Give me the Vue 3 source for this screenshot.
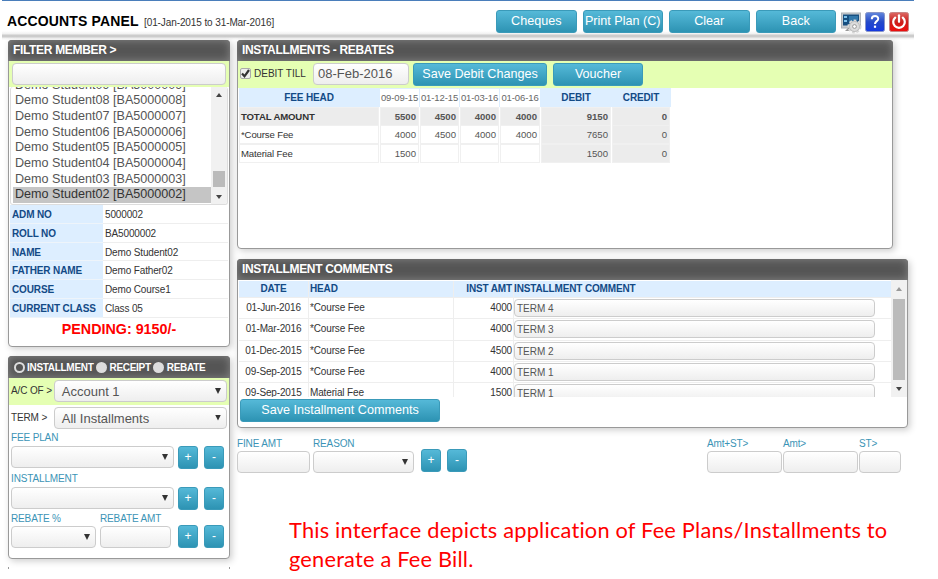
<template>
  <div class="page">
    <header class="topbar">
      <h1>ACCOUNTS PANEL</h1>
      <span class="period">[01-Jan-2015 to 31-Mar-2016]</span>
      <nav class="actions">
        <button v-for="a in actions" :key="a" class="btn btn-top">{{ a }}</button>
      </nav>
      <div class="icons">
        <svg width="21" height="22" viewBox="0 0 21 22">
          <rect x="0.5" y="1" width="19" height="15" fill="#c9ccd0" stroke="#aeb2b6" />
          <rect x="2" y="2.500" width="16" height="11" fill="#174f80" />
          <path d="M3 4h3v2h-3zM3 8h3v2h-3z" fill="#7fc3ec" />
          <path d="M8 4h9v4l-9 4z" fill="#3277aa" />
          <path d="M4 19l3-3h5v3z" fill="#999" />
          <circle cx="13.500" cy="14.500" r="5.800" fill="#dedede" stroke="#d8d8d8" stroke-width="2.500" stroke-dasharray="2.600 1.700" />
          <circle cx="13.500" cy="14.500" r="5" fill="#dcdcdc" stroke="#aaa" stroke-width=".6" />
          <circle cx="13.500" cy="14.500" r="1.900" fill="#fff" stroke="#888" stroke-width=".8" />
        </svg>
        <svg width="20" height="20" viewBox="0 0 20 20">
          <defs>
            <linearGradient id="blue" x1="0" y1="0" x2="0" y2="1">
              <stop offset="0" stop-color="#6387dc" />
              <stop offset=".5" stop-color="#2449c8" />
              <stop offset="1" stop-color="#1438e0" />
            </linearGradient>
          </defs>
          <rect x=".5" y=".5" width="19" height="19" rx="2" fill="url(#blue)" stroke="#8996c8" />
          <path d="M6.800 7.200c0-4.200 6.700-4 6.400-.2c-.2 2.200-3.200 2.200-3.200 5" fill="none" stroke="#fff" stroke-width="2" />
          <rect x="8.900" y="13.600" width="2.200" height="2.200" fill="#fff" />
        </svg>
        <svg width="20" height="20" viewBox="0 0 20 20">
          <defs>
            <linearGradient id="red" x1="0" y1="0" x2="0" y2="1">
              <stop offset="0" stop-color="#dc6a66" />
              <stop offset=".5" stop-color="#cc1d1a" />
              <stop offset="1" stop-color="#ee0d0d" />
            </linearGradient>
          </defs>
          <rect x=".5" y=".5" width="19" height="19" rx="2" fill="url(#red)" stroke="#c98484" />
          <path d="M6.200 5.600a5.800 5.800 0 1 0 7.600 0" fill="none" stroke="#fff" stroke-width="2.200" stroke-linecap="round" />
          <path d="M10 3.300v6.500" stroke="#fff" stroke-width="2.200" stroke-linecap="round" />
        </svg>
      </div>
    </header>

    <main class="body">
      <aside class="left">
        <section class="panel member">
          <h2>FILTER MEMBER &gt;</h2>
          <div class="search"><div class="field"></div></div>
          <div class="list">
            <ul>
              <li v-for="n in students" :key="n" :class="{ selected: n === selected }">
                Demo Student{{ n }} [BA50000{{ n }}]
              </li>
            </ul>
            <div class="scroll">
              <i class="up"></i>
              <i class="thumb"></i>
              <i class="down"></i>
            </div>
          </div>
          <dl>
            <template v-for="d in details" :key="d[0]">
              <dt>{{ d[0] }}</dt>
              <dd>{{ d[1] }}</dd>
            </template>
          </dl>
          <p class="pending">PENDING: 9150/-</p>
        </section>

        <section class="panel plan">
          <h2 class="modes">
            <span class="radio on"></span><b>INSTALLMENT</b>
            <span class="radio"></span><b>RECEIPT</b>
            <span class="radio"></span><b>REBATE</b>
          </h2>
          <div class="line green">
            <label>A/C OF &gt;</label>
            <div class="field select">Account 1</div>
          </div>
          <div class="line">
            <label>TERM &gt;</label>
            <div class="field select">All Installments</div>
          </div>
          <div class="caption">FEE PLAN</div>
          <div class="pick">
            <div class="field select"></div>
            <button class="btn sq">+</button>
            <button class="btn sq">-</button>
          </div>
          <div class="caption second">INSTALLMENT</div>
          <div class="pick">
            <div class="field select"></div>
            <button class="btn sq">+</button>
            <button class="btn sq">-</button>
          </div>
          <div class="caption third"><span>REBATE %</span><span>REBATE AMT</span></div>
          <div class="pick rebate">
            <div class="field select"></div>
            <div class="field amt"></div>
            <button class="btn sq">+</button>
            <button class="btn sq">-</button>
          </div>
        </section>
        <div class="next"></div>
      </aside>

      <div class="right">
        <section class="panel rebates">
          <h2>INSTALLMENTS - REBATES</h2>
          <div class="debit">
            <span class="check">
              <svg width="11" height="11" viewBox="0 0 11 11"><path d="M2 5.500l2.500 2.800l4.500-6.300" fill="none" stroke="#333" stroke-width="2.200" /></svg>
            </span>
            <label>DEBIT TILL</label>
            <div class="field date">08-Feb-2016</div>
            <button class="btn save">Save Debit Changes</button>
            <button class="btn voucher">Voucher</button>
          </div>
          <div class="fees">
            <div class="fee-row fee-head">
              <span>FEE HEAD</span>
              <span v-for="d in dates" :key="d" class="day">{{ d }}</span>
              <span>DEBIT</span>
              <span>CREDIT</span>
            </div>
            <div v-for="(f, i) in fees" :key="f.name" class="fee-row" :class="{ total: i === 0 }">
              <span class="name">{{ f.name }}</span>
              <span v-for="(v, j) in f.values" :key="j" class="num">{{ v }}</span>
              <span class="num sum">{{ f.debit }}</span>
              <span class="num sum">0</span>
            </div>
          </div>
        </section>

        <section class="panel comments">
          <h2>INSTALLMENT COMMENTS</h2>
          <div class="comment-box">
            <div class="grid">
              <div class="c-row c-head">
                <span>DATE</span>
                <span>HEAD</span>
                <span>INST AMT</span>
                <span>INSTALLMENT COMMENT</span>
              </div>
              <div v-for="c in comments" :key="c.date + c.head" class="c-row">
                <span>{{ c.date }}</span>
                <span>{{ c.head }}</span>
                <span>{{ c.amount }}</span>
                <span><div class="field note">{{ c.note }}</div></span>
              </div>
            </div>
            <div class="scroll tall">
              <i class="up dim"></i>
              <i class="thumb"></i>
              <i class="down"></i>
            </div>
          </div>
          <button class="btn save-comments">Save Installment Comments</button>
        </section>

        <div class="fine">
          <div class="unit amount"><label>FINE AMT</label><div class="field"></div></div>
          <div class="unit reason"><label>REASON</label><div class="field select"></div></div>
          <button class="btn sq">+</button>
          <button class="btn sq">-</button>
          <div class="unit wide"><label>Amt+ST&gt;</label><div class="field"></div></div>
          <div class="unit mid"><label>Amt&gt;</label><div class="field"></div></div>
          <div class="unit small"><label>ST&gt;</label><div class="field"></div></div>
        </div>

        <p class="notice">
          <span>This interface depicts application of Fee Plans/Installments to</span><br>
          <span>generate a Fee Bill.</span>
        </p>
      </div>
    </main>
  </div>
</template>

<script setup>
import { ref } from 'vue';

const actions = ['Cheques', 'Print Plan (C)', 'Clear', 'Back'];
const students = ['09', '08', '07', '06', '05', '04', '03', '02'];
const selected = ref('02');

const details = [
  ['ADM NO', '5000002'],
  ['ROLL NO', 'BA5000002'],
  ['NAME', 'Demo Student02'],
  ['FATHER NAME', 'Demo Father02'],
  ['COURSE', 'Demo Course1'],
  ['CURRENT CLASS', 'Class 05'],
];

const dates = ['09-09-15', '01-12-15', '01-03-16', '01-06-16'];
const fees = [
  { name: 'TOTAL AMOUNT', values: [5500, 4500, 4000, 4000], debit: 9150 },
  { name: '*Course Fee', values: [4000, 4500, 4000, 4000], debit: 7650 },
  { name: 'Material Fee', values: [1500, '', '', ''], debit: 1500 },
];

const comments = [
  { date: '01-Jun-2016', head: '*Course Fee', amount: 4000, note: 'TERM 4' },
  { date: '01-Mar-2016', head: '*Course Fee', amount: 4000, note: 'TERM 3' },
  { date: '01-Dec-2015', head: '*Course Fee', amount: 4500, note: 'TERM 2' },
  { date: '09-Sep-2015', head: '*Course Fee', amount: 4000, note: 'TERM 1' },
  { date: '09-Sep-2015', head: 'Material Fee', amount: 1500, note: 'TERM 1' },
];
</script>

<style>
body {
  background: #fff;
  overflow: hidden;
}
</style>

<style scoped>
.page,
.page * {
  box-sizing: border-box;
}

.page {
  width: 938px;
  height: 579px;
  overflow: hidden;
  font-family: 'Liberation Sans', Arial, sans-serif;
  font-size: 10px;
  letter-spacing: -0.14px;
  color: #333;
}

h1,
h2,
p,
ul,
dl,
dd {
  margin: 0;
  padding: 0;
}

.topbar {
  display: flex;
  width: 912px;
  height: 40px;
  margin-left: 2px;
  padding-left: 5px;
  border-top: 1px solid #4a7ebb;
  background: linear-gradient(#fff 30px, #f0f0f0 33px, #ccc 34px, #ccc 36px, #f0f0f0 37px, #fff 39px);
}

h1 {
  width: 137px;
  font-size: 14px;
  line-height: 16px;
  padding-top: 12px;
  letter-spacing: 0.15px;
  white-space: nowrap;
  color: #000;
}

.period {
  width: 352px;
  font-size: 10px;
  line-height: 12px;
  padding-top: 16px;
  letter-spacing: -0.1px;
}

.actions {
  display: flex;
  gap: 6px;
  padding-top: 9px;
}

.btn {
  display: block;
  flex: none;
  padding: 0;
  height: 23px;
  border: 1px solid #3a9ab9;
  border-radius: 3px;
  background: linear-gradient(#55b9d8, #2d93b3);
  color: #fff;
  font-family: inherit;
  font-size: 12.6px;
  line-height: 21px;
  text-align: center;
  white-space: nowrap;
}

.btn-top {
  width: 80.5px;
}

.icons {
  display: flex;
  gap: 4px;
  padding: 11px 0 0 5px;
}

.icons svg {
  flex: none;
}

.icons svg:first-child {
  margin-right: -1px;
}

.body {
  display: flex;
  gap: 7px;
  padding-left: 8px;
}

.left {
  width: 222px;
  flex: none;
}

.right {
  width: 680px;
}

.panel {
  border: 1px solid #999;
  border-radius: 4px;
  background: #fff;
  box-shadow: 2px 2px 7px #ccc;
}

h2 {
  height: 21px;
  margin: -1px -1px 0;
  padding-left: 5px;
  border-radius: 4px 4px 0 0;
  background: #555;
  box-shadow: inset 0 0 8px #888;
  color: #fff;
  font-size: 12px;
  line-height: 21px;
  font-weight: 700;
  letter-spacing: -0.33px;
  white-space: nowrap;
}

.member {
  height: 307px;
}

.search {
  height: 26px;
  padding: 2px 3px;
  background: #e5ffb3;
}

.field {
  height: 22px;
  border: 1px solid #ccc;
  border-radius: 4px;
  background: linear-gradient(#fff, #eee);
  color: #555;
  font-size: 13px;
  letter-spacing: 0;
  line-height: 20px;
  white-space: nowrap;
}

.list {
  display: flex;
  height: 118px;
  margin: 0 1px;
  border: 1px solid #ddd;
  border-width: 0 1px 1px;
  border-radius: 3px;
  overflow: hidden;
}

ul {
  display: flex;
  flex-direction: column;
  justify-content: flex-end;
  flex: 1;
  padding: 0 0 1px 2px;
  list-style: none;
}

li {
  height: 15.7px;
  flex: none;
  padding-left: 2px;
  font-size: 12.6px;
  letter-spacing: 0;
  line-height: 15.7px;
  color: #555;
  white-space: nowrap;
}

.selected {
  background: #c5c5c5;
  color: #333;
}

.scroll {
  display: flex;
  flex-direction: column;
  align-items: center;
  justify-content: space-between;
  width: 16px;
  padding: 6px 0 5px;
  background: #f1f1f1;
}

.scroll i {
  display: block;
}

.up,
.down {
  width: 0;
  height: 0;
  border: 3.5px solid transparent;
}

.up {
  border-top: 0;
  border-bottom: 4px solid #444;
}

.down {
  border-bottom: 0;
  border-top: 4px solid #444;
}

.up.dim {
  border-bottom-color: #999;
}

.thumb {
  width: 12px;
  height: 16px;
  margin-top: 65px;
  background: #bbb;
}

dl {
  display: grid;
  grid-template-columns: 93px 1fr;
  grid-auto-rows: 18.75px;
  line-height: 20px;
  padding: 0 1px;
}

dt {
  padding-left: 2px;
  border-bottom: 1px solid #eef4fa;
  background: #def;
  color: #134a86;
  font-weight: 700;
}

dd {
  padding-left: 2px;
  border-bottom: 1px solid #eee;
}

.pending {
  color: red;
  font-size: 14.3px;
  letter-spacing: 0;
  line-height: 23px;
  font-weight: 700;
  text-align: center;
}

.plan {
  height: 203px;
  margin-top: 9px;
}

.modes {
  display: flex;
  align-items: center;
  height: 22px;
  font-size: 10px;
  letter-spacing: -0.3px;
}

.radio {
  width: 11px;
  height: 11px;
  margin: 0 3px 0 2px;
  border-radius: 50%;
  background: #ddd;
}

.radio.on {
  margin: 0 2px 0 1px;
  border: 2.5px solid #ddd;
  background: #555;
}

.line {
  display: flex;
  height: 26.5px;
  padding: 2px 2px 0;
}

.line label {
  width: 43px;
  line-height: 22px;
  white-space: nowrap;
}

.line .field {
  width: 174px;
}

.green {
  background: #e5ffb3;
}

.select {
  display: flex;
  justify-content: space-between;
  padding: 1px 5px 0 7px;
}

.select::after {
  content: '';
  width: 6px;
  height: 6px;
  margin: 6px 0 0 auto;
  background: #333;
  clip-path: polygon(0 0, 100% 0, 50% 100%);
}

.caption {
  height: 15px;
  padding: 1px 0 0 2px;
  color: #3b94b6;
  font-size: 10px;
  line-height: 12px;
}

.pick {
  display: flex;
  gap: 6px;
  height: 23px;
  padding-left: 2px;
}

.pick .select {
  width: 163px;
  margin-right: -2px;
}

.sq {
  width: 20px;
  font-size: 12px;
}

.second {
  height: 18px;
  padding-top: 4px;
}

.third {
  display: flex;
  height: 15px;
  padding-top: 3px;
}

.third span {
  width: 89px;
}

.rebate .select {
  width: 85px;
  margin-top: 1px;
}

.rebate .amt {
  width: 71px;
  margin: 1px 1px 0 0;
}

.next {
  height: 2px;
  margin-top: 8px;
  border: 1px solid #999;
  border-width: 0 1px;
}

.rebates {
  width: 655.5px;
  height: 209px;
}

.debit {
  display: flex;
  height: 27px;
  padding-top: 2px;
  background: #e5ffb3;
}

.check {
  width: 11px;
  height: 11px;
  margin: 5px 3px 0 2px;
  border: 1px solid #aaa;
  border-radius: 2px;
  background: #eee;
}

.check svg {
  display: block;
  margin: -1px;
}

.debit label {
  width: 59px;
  line-height: 21px;
  letter-spacing: 0;
}

.date {
  width: 96px;
  padding-left: 4px;
}

.save {
  width: 134px;
  margin-left: 4px;
}

.voucher {
  width: 90px;
  margin-left: 6px;
}

.fees {
  width: 432px;
  margin-left: 1px;
}

.fee-row {
  display: grid;
  grid-template-columns: 141px 40px 40px 40px 41px 71px 59px;
  height: 18.7px;
  font-size: 9.6px;
  line-height: 17px;
}

.fee-row span {
  margin: 0 1px 1px 0;
  border: 1px solid #f0f0f0;
  white-space: nowrap;
}

.fee-head {
  background: #def;
  color: #134a86;
  font-size: 10px;
  font-weight: 700;
  text-align: center;
}

.fee-row.fee-head span {
  border-color: transparent;
}

.fee-row.fee-head .day {
  margin: 1px 1px 1px 0;
  border: 0;
  background: #fff;
  color: #666;
  font-size: 9.5px;
  font-weight: 400;
  letter-spacing: -0.1px;
}

.num {
  padding-right: 2px;
  text-align: right;
  color: #555;
  letter-spacing: 0;
}

.name {
  padding-left: 1px;
}

.total {
  font-weight: 700;
}

.total span,
.fee-row .sum {
  background: #ececec;
}

.comments {
  width: 671px;
  height: 169px;
  margin-top: 10px;
}

.comment-box {
  display: flex;
  height: 117px;
  padding-left: 1px;
  overflow: hidden;
}

.grid {
  width: 652px;
  padding-top: 1px;
}

.c-row {
  display: grid;
  grid-template-columns: 69px 145px 60px 1fr;
  height: 21.3px;
  border-bottom: 1px solid #eee;
  line-height: 20px;
}

.c-row > span {
  padding: 0 1px;
  border-left: 1px solid #eee;
}

.c-row > span:first-child {
  border-left: 0;
  text-align: center;
}

.c-row > span:nth-child(3) {
  text-align: right;
}

.c-row > span:nth-child(4) {
  padding-left: 0;
}

.c-row.c-head {
  height: 17px;
  line-height: 16px;
  background: #def;
  color: #134a86;
  font-weight: 700;
}

.c-head > span:nth-child(3) {
  white-space: nowrap;
}

.note {
  width: 361px;
  height: 18px;
  margin-top: 1px;
  padding-left: 2px;
  font-size: 10px;
  line-height: 17px;
}

.tall {
  padding: 7px 0 6px;
}

.tall .thumb {
  width: 12px;
  height: 81px;
  margin: 0;
}

.save-comments {
  width: 200px;
  margin: 2px 0 0 2px;
}

.fine {
  display: flex;
  width: 664px;
  height: 38px;
  margin-top: 8px;
}

.unit label {
  display: block;
  height: 15px;
  padding-top: 1px;
  color: #3b94b6;
  font-size: 10px;
  line-height: 14px;
}

.amount {
  width: 73px;
  margin-right: 3px;
}

.reason {
  width: 101px;
  margin-right: 1px;
}

.fine .sq {
  margin: 13px 0 0 6px;
}

.wide {
  width: 75px;
  margin-left: auto;
}

.mid {
  width: 75px;
  margin: 0 1px;
}

.small {
  width: 42px;
}

.notice {
  width: 630px;
  padding: 41px 0 0 52px;
  color: red;
  font-family: Lato, 'Open Sans', sans-serif;
  font-size: 21.8px;
  letter-spacing: 0.2px;
  line-height: 29px;
  white-space: nowrap;
}
</style>
